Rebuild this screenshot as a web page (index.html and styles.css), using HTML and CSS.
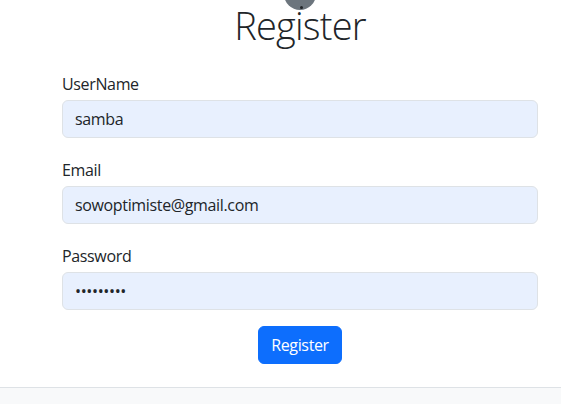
FILE: index.html
```html
<!DOCTYPE html>
<html lang="en">
<head>
<meta charset="utf-8">
<title>Register</title>
<link rel="stylesheet" href="styles.css">
</head>
<body>
<div class="avatar"><span class="avatar-dot"></span></div>
<main class="page">
  <h1 class="title">Register</h1>
  <form class="form">
    <div class="field">
      <label class="label" for="u">UserName</label>
      <input class="input" id="u" type="text" value="samba">
    </div>
    <div class="field">
      <label class="label" for="e">Email</label>
      <input class="input" id="e" type="text" value="sowoptimiste@gmail.com">
    </div>
    <div class="field">
      <label class="label" for="p">Password</label>
      <input class="input" id="p" type="password" value="123456789">
    </div>
    <div class="actions">
      <button class="btn" type="button">Register</button>
    </div>
  </form>
</main>
<footer class="footer"></footer>
</body>
</html>
```
FILE: styles.css
```css
* { box-sizing: border-box; }
html, body { margin: 0; padding: 0; }
body {
  font-family: "Open Sans", "Noto Sans", "Liberation Sans", sans-serif;
  font-size: 16px;
  line-height: 1.5;
  letter-spacing: -0.35px;
  color: #212529;
  background: #fff;
  height: 404px;
  overflow: hidden;
  position: relative;
  display: flex;
  flex-direction: column;
}
.avatar {
  position: absolute;
  left: 284px;
  top: -22px;
  width: 32px;
  height: 32px;
  border-radius: 50%;
  background: #6c757d;
  display: flex;
  align-items: flex-end;
  justify-content: center;
  padding-bottom: 1px;
}
.avatar-dot {
  width: 3px;
  height: 3px;
  border-radius: 50%;
  background: #212529;
  margin-left: 2px;
}
.page {
  padding: 0 23px 0 62px;
  flex: 0 0 387px;
}
.title {
  margin: 0 0 20px;
  text-align: center;
  font-weight: 300;
  font-size: 38px;
  letter-spacing: -0.8px;
  line-height: 48px;
  padding-top: 1px;
  margin-bottom: 19px;
}
.form { display: flex; flex-direction: column; }
.field { display: flex; flex-direction: column; margin-bottom: 16px; }
.label { display: block; padding-top: 4px; margin-bottom: 4px; line-height: 24px; }
.input {
  height: 38px;
  padding: 6px 12px;
  font: inherit;
  letter-spacing: inherit;
  color: #212529;
  background: #e8f0fe;
  border: 1px solid #dee2e6;
  border-radius: 6px;
  outline: none;
}
.actions { display: flex; justify-content: center; }
.btn {
  height: 38px;
  padding: 6px 12px;
  font: inherit;
  letter-spacing: inherit;
  color: #fff;
  background: #0d6efd;
  border: 1px solid #0d6efd;
  border-radius: 6px;
}
.footer {
  flex: 1;
  border-top: 1px solid #dee2e6;
  background: #f8f9fa;
}
```
